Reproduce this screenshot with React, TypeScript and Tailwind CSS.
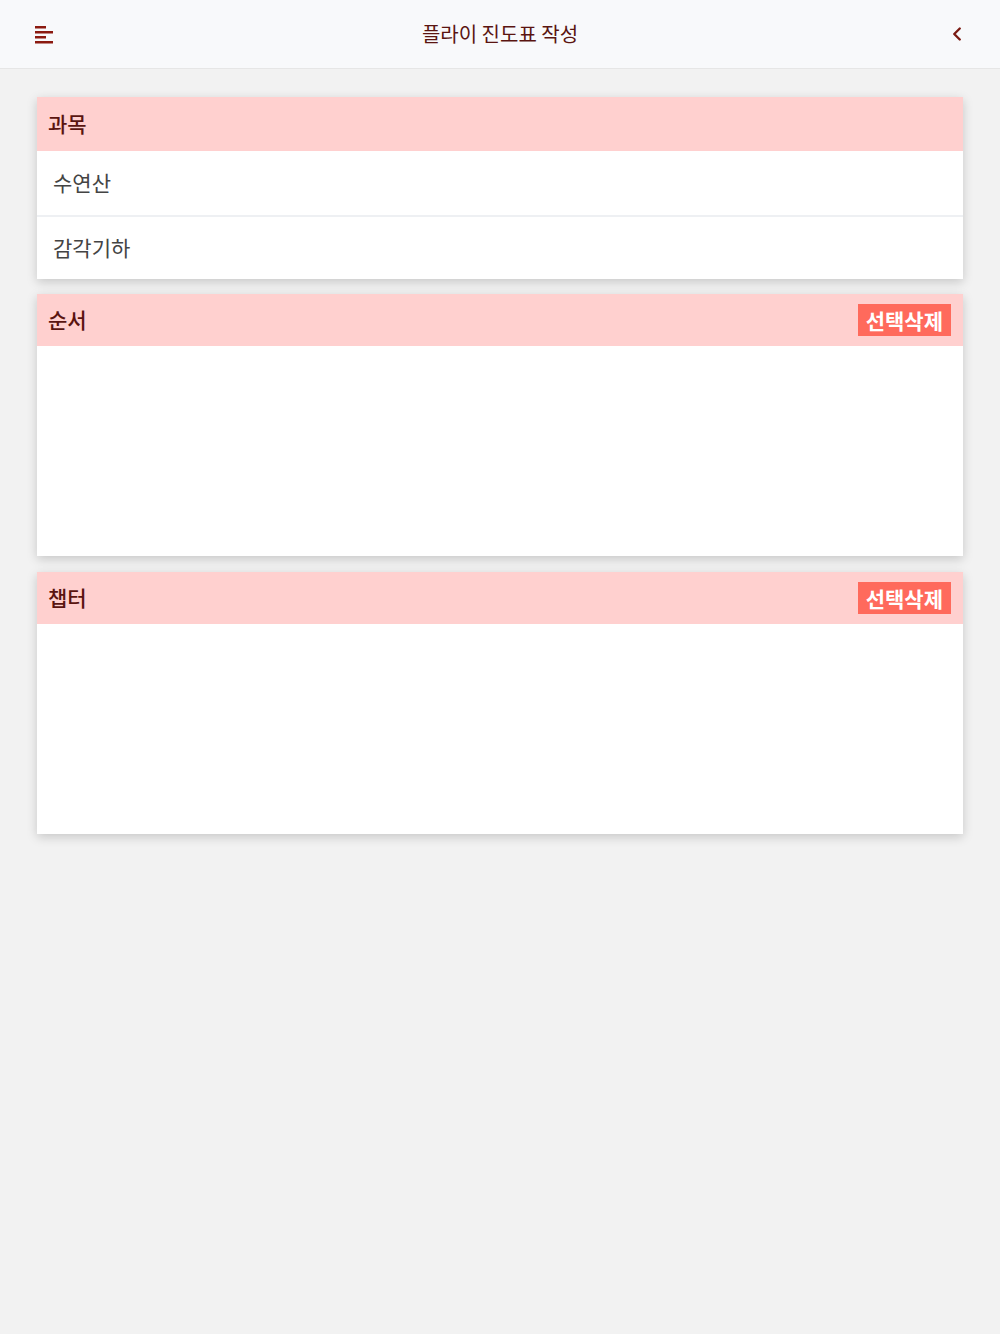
import { ChevronLeft } from 'lucide-react';

const font = { fontFamily: '"Noto Sans CJK KR", "Noto Sans", sans-serif' };

function MenuIcon() {
  return (
    <svg width="19" height="19" viewBox="0 0 19 19" className="text-[#8b1a10]">
      <rect x="0" y="1" width="11" height="2.5" fill="currentColor" />
      <rect x="0" y="6" width="18" height="2.5" fill="currentColor" />
      <rect x="0" y="11" width="11" height="2.5" fill="currentColor" />
      <rect x="0" y="16" width="18" height="2.5" fill="currentColor" />
    </svg>
  );
}

function CardHeader({ title, action, tall }: { title: string; action?: boolean; tall?: boolean }) {
  return (
    <div
      className={`${tall ? 'h-[54px]' : 'h-[52px]'} bg-[#ffd0cf] flex items-center justify-between pl-[11px] pr-[12px]`}
    >
      <span className="text-[21px] font-medium text-[#5a1410]">{title}</span>
      {action && (
        <button className="h-[32px] px-[8px] bg-[#ff6a5c] text-white text-[21px] font-bold leading-none">
          선택삭제
        </button>
      )}
    </div>
  );
}

export default function App() {
  const subjects = ['수연산', '감각기하'];

  return (
    <div className="min-h-[1334px] bg-[#f2f2f2]" style={font}>
      <header className="h-[69px] bg-[#f8f9fb] border-b border-[#e6e6e6] flex items-center justify-between pl-[35px] pr-[32px]">
        <MenuIcon />
        <h1 className="text-[20px] text-[#5a1410]">플라이 진도표 작성</h1>
        <ChevronLeft className="w-[22px] h-[22px] text-[#7a1a12]" strokeWidth={2.6} />
      </header>

      <main className="px-[37px] pt-[28px] flex flex-col">
        <section className="bg-white shadow-[0_3px_10px_rgba(0,0,0,0.18)]">
          <CardHeader title="과목" tall />
          {subjects.map((s, i) => (
            <div
              key={s}
              className={`h-[64px] flex items-center px-[16px] text-[21px] text-[#444] ${i > 0 ? 'border-t-2 border-[#eef0f3]' : ''}`}
            >
              {s}
            </div>
          ))}
        </section>

        <section className="mt-[15px] bg-white shadow-[0_3px_10px_rgba(0,0,0,0.18)]">
          <CardHeader title="순서" action />
          <div className="h-[210px]" />
        </section>

        <section className="mt-[16px] bg-white shadow-[0_3px_10px_rgba(0,0,0,0.18)]">
          <CardHeader title="챕터" action />
          <div className="h-[210px]" />
        </section>
      </main>
    </div>
  );
}
